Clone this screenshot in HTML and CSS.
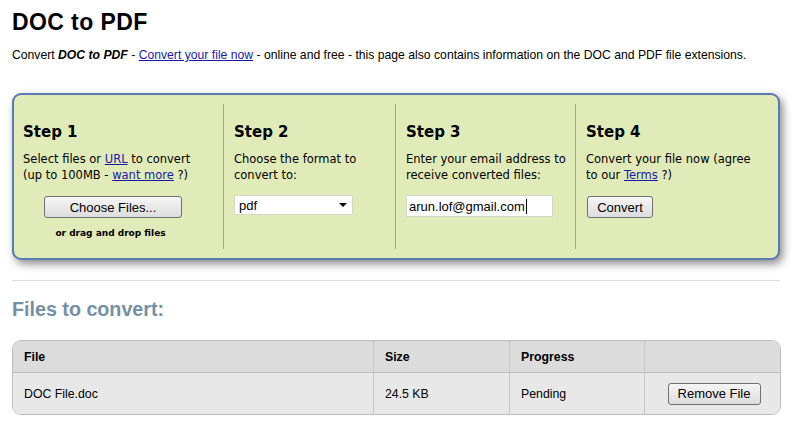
FILE: index.html
```html
<!DOCTYPE html>
<html>
<head>
<meta charset="utf-8">
<link rel="stylesheet" href="styles.css">
</head>
<body>
<div class="page">
  <h1 class="title">DOC to PDF</h1>
  <p class="intro">Convert <b><i>DOC to PDF</i></b> - <a href="#">Convert your file now</a> - online and free - this page also contains information on the DOC and PDF file extensions.</p>

  <div class="steps">
    <div class="step">
      <h2>Step 1</h2>
      <p>Select files or <a href="#">URL</a> to convert (up to 100MB - <a href="#">want more</a> ?)</p>
      <div class="center">
        <button class="btn btn-choose">Choose Files...</button>
        <div class="drag">or drag and drop files</div>
      </div>
    </div>
    <div class="step">
      <h2>Step 2</h2>
      <p>Choose the format to convert to:</p>
      <div class="select"><span>pdf</span><span class="caret"></span></div>
    </div>
    <div class="step">
      <h2>Step 3</h2>
      <p>Enter your email address to receive converted files:</p>
      <div class="input"><span>arun.lof@gmail.com</span><span class="cursor"></span></div>
    </div>
    <div class="step">
      <h2>Step 4</h2>
      <p>Convert your file now (agree to our <a href="#">Terms</a> ?)</p>
      <button class="btn btn-convert">Convert</button>
    </div>
  </div>

  <hr class="rule">

  <h2 class="files-title">Files to convert:</h2>

  <div class="table">
    <div class="row head">
      <div class="cell c1">File</div>
      <div class="cell c2">Size</div>
      <div class="cell c3">Progress</div>
      <div class="cell c4"></div>
    </div>
    <div class="row body">
      <div class="cell c1">DOC File.doc</div>
      <div class="cell c2">24.5 KB</div>
      <div class="cell c3">Pending</div>
      <div class="cell c4"><button class="btn btn-remove">Remove File</button></div>
    </div>
  </div>
</div>
</body>
</html>
```
FILE: styles.css
```css
* { box-sizing: border-box; }
html, body { margin: 0; padding: 0; background: #fff; }
body { font-family: "Liberation Sans", Arial, sans-serif; color: #000; }
.page { padding: 0 12px; width: 792px; }
a { color: #1a1aa6; text-decoration: underline; }

.title {
  margin: 0;
  padding-top: 9px;
  font-size: 23px;
  line-height: 27px;
  font-weight: bold;
  letter-spacing: 0.4px;
}
.intro {
  margin: 11px 0 0;
  font-size: 12.2px;
  line-height: 16px;
}

.steps {
  margin-top: 30px;
  width: 768px;
  height: 167px;
  background: #e1ebb9;
  border: 2px solid #5b79b3;
  border-radius: 9px;
  box-shadow: 3px 4px 8px rgba(0,0,0,0.45);
  display: grid;
  grid-template-columns: 209px 172px 180px 1fr;
  padding: 9px 0;
  font-family: "DejaVu Sans", Verdana, sans-serif;
}
.step {
  border-left: 1px solid #a0a59a;
  padding: 0 6px 0 10px;
}
.step:first-child { border-left: none; padding-left: 9px; }
.step h2 {
  margin: 19px 0 0;
  font-size: 15px;
  line-height: 18px;
  font-weight: bold;
}
.step p {
  margin: 10px 0 0;
  max-width: 172px;
  font-size: 11.5px;
  line-height: 16px;
}
.center { text-align: center; width: 175px; }
.btn {
  font-family: "Liberation Sans", Arial, sans-serif;
  font-size: 13px;
  color: #000;
  background: linear-gradient(#f6f6f6, #dddddd);
  border: 1px solid #707070;
  border-radius: 3px;
  padding: 0;
}
.btn-choose { width: 138px; height: 22px; margin-top: 13px; margin-left: 5px; }
.drag {
  margin-top: 9px;
  font-size: 9px;
  font-weight: bold;
  line-height: 12px;
}
.select {
  margin-top: 12px;
  width: 119px;
  height: 20px;
  background: #fff;
  border: 1px solid #d4d8c4;
  display: flex;
  align-items: center;
  justify-content: space-between;
  padding: 0 5px 0 4px;
  font-family: "Liberation Sans", Arial, sans-serif;
  font-size: 13px;
}
.caret {
  width: 0; height: 0;
  border-left: 4px solid transparent;
  border-right: 4px solid transparent;
  border-top: 4px solid #000;
}
.input {
  margin-top: 12px;
  width: 147px;
  height: 22px;
  background: #fff;
  border: 1px solid #d4d8c4;
  display: flex;
  align-items: center;
  padding: 0 2px;
  font-family: "Liberation Sans", Arial, sans-serif;
  font-size: 13px;
}
.cursor { width: 1px; height: 15px; background: #000; margin-left: 1px; }
.btn-convert { width: 66px; height: 22px; margin-top: 13px; margin-left: 1px; }

.rule {
  margin: 20px 0 0;
  border: none;
  border-top: 1px solid #dcdcdc;
  width: 768px;
}
.files-title {
  margin: 15px 0 0;
  font-size: 19.7px;
  line-height: 26px;
  font-weight: bold;
  color: #7590a5;
}

.table {
  margin-top: 18px;
  width: 769px;
  border: 1px solid #bdbdbd;
  border-radius: 9px;
  overflow: hidden;
  font-size: 12.3px;
}
.row { display: grid; grid-template-columns: 360px 136px 135px 1fr; }
.head { background: #dcdcdc; height: 32px; font-weight: bold; border-bottom: 1px solid #bdbdbd; }
.body { background: #e8e8e8; height: 41px; }
.cell { display: flex; align-items: center; padding-left: 11px; border-left: 1px solid #c8c8c8; }
.cell.c1 { border-left: none; }
.cell.c4 { justify-content: center; padding-left: 0; }
.btn-remove { width: 93px; height: 22px; margin-left: 3px; }
```
